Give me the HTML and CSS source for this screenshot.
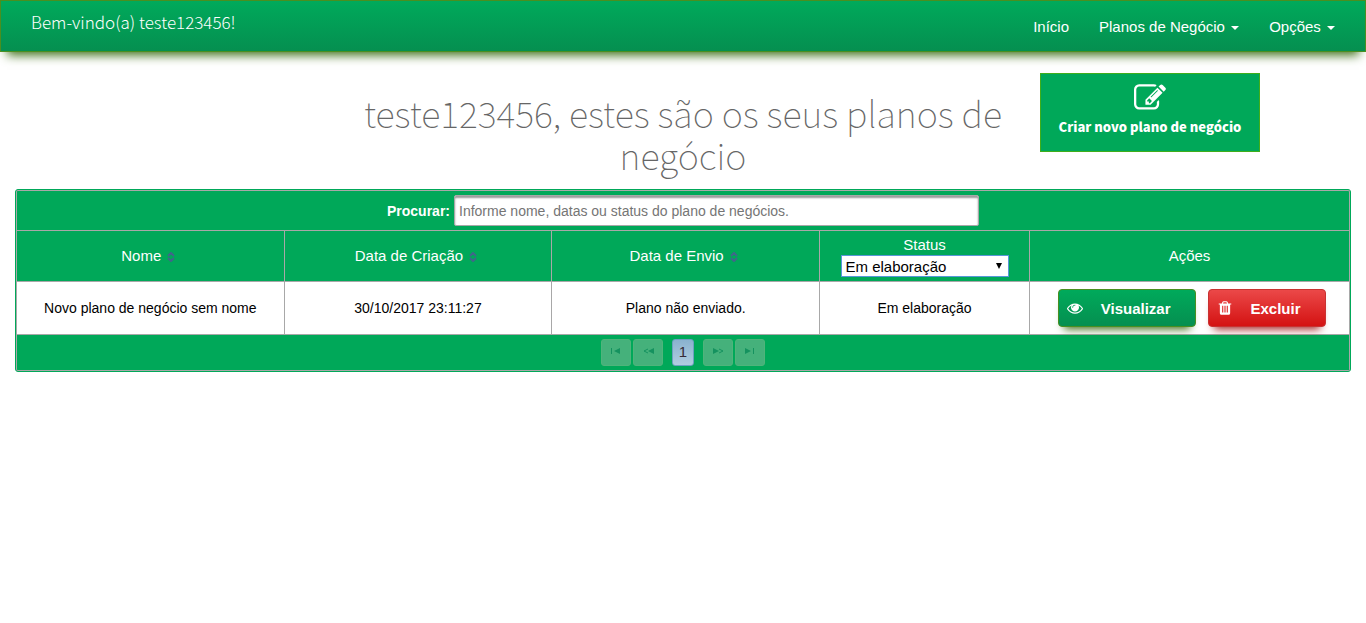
FILE: index.html
```html
<!DOCTYPE html>
<html lang="pt-BR">
<head>
<meta charset="utf-8">
<meta name="viewport" content="width=device-width, initial-scale=1">
<title>Planos de negócio</title>
<link rel="stylesheet" href="styles.css">
</head>
<body>
<header class="navbar">
  <p class="welcome">Bem-vindo(a) teste123456!</p>
  <nav class="menu">
    <a href="#">Início</a>
    <a href="#">Planos de Negócio <span class="caret"></span></a>
    <a href="#">Opções <span class="caret"></span></a>
  </nav>
</header>
<main>
  <div class="intro">
    <h1 class="title">teste123456, estes são os seus planos de negócio</h1>
    <div class="intro-action">
      <button type="button" class="create">
        <svg class="create-icon" viewBox="0 0 1792 1792" aria-hidden="true"><path d="M888 1184l116-116-152-152-116 116v56h96v96h56zm440-720q-16-16-33 1l-350 350q-17 17-1 33t33-1l350-350q17-17 1-33zm80 594v190q0 119-84.5 203.5t-203.5 84.5h-832q-119 0-203.5-84.5t-84.5-203.5v-832q0-119 84.5-203.5t203.5-84.5h832q63 0 117 25 15 7 18 23 3 17-9 29l-49 49q-14 14-32 8-23-6-45-6h-832q-66 0-113 47t-47 113v832q0 66 47 113t113 47h832q66 0 113-47t47-113v-126q0-13 9-22l64-64q15-15 35-7t20 29zm-96-738l288 288-672 672h-288v-288zm444 132l-92 92-288-288 92-92q28-28 68-28t68 28l152 152q28 28 28 68t-28 68z"/></svg>
        <span>Criar novo plano de negócio</span>
      </button>
    </div>
  </div>
  <section class="plans">
    <div class="search">
      <label for="search">Procurar:</label>
      <input id="search" type="text" placeholder="Informe nome, datas ou status do plano de negócios.">
    </div>
    <table class="grid">
      <colgroup><col class="c-main"><col class="c-main"><col class="c-main"><col class="c-status"><col class="c-actions"></colgroup>
      <thead>
        <tr>
          <th scope="col">Nome <svg class="sort" viewBox="0 0 8 10" aria-hidden="true"><path d="M1 4l3-3 3 3M1 6l3 3 3-3"/></svg></th>
          <th scope="col">Data de Criação <svg class="sort" viewBox="0 0 8 10" aria-hidden="true"><path d="M1 4l3-3 3 3M1 6l3 3 3-3"/></svg></th>
          <th scope="col">Data de Envio <svg class="sort" viewBox="0 0 8 10" aria-hidden="true"><path d="M1 4l3-3 3 3M1 6l3 3 3-3"/></svg></th>
          <th scope="col">
            <label class="status-label" for="status">Status</label>
            <span class="select-wrap">
              <select id="status" class="status"><option>Em elaboração</option></select>
              <svg class="arrow" viewBox="0 0 6 6" aria-hidden="true"><path d="M0 0h6L3 6z"/></svg>
            </span>
          </th>
          <th scope="col">Ações</th>
        </tr>
      </thead>
      <tbody>
        <tr>
          <td>Novo plano de negócio sem nome</td>
          <td>30/10/2017 23:11:27</td>
          <td>Plano não enviado.</td>
          <td>Em elaboração</td>
          <td>
            <div class="actions">
              <button type="button" class="btn view"><svg class="icon" viewBox="0 0 1792 1792" aria-hidden="true"><path d="M1664 960q-152-236-381-353 61 104 61 225 0 185-131.5 316.5t-316.5 131.5-316.5-131.5-131.5-316.5q0-121 61-225-229 117-381 353 133 205 333.5 326.5t434.5 121.5 434.5-121.5 333.5-326.5zm-720-384q0-20-14-34t-34-14q-125 0-214.5 89.5t-89.5 214.5q0 20 14 34t34 14 34-14 14-34q0-86 61-147t147-61q20 0 34-14t14-34zm848 384q0 34-20 69-140 230-376.5 368.5t-499.5 138.5-499.5-139-376.5-368q-20-35-20-69t20-69q140-229 376.5-368t499.5-139 499.5 139 376.5 368q20 35 20 69z"/></svg><span>Visualizar</span></button>
              <button type="button" class="btn remove"><svg class="icon" viewBox="0 0 1792 1792" aria-hidden="true"><path d="M704 1376v-704q0-14-9-23t-23-9h-64q-14 0-23 9t-9 23v704q0 14 9 23t23 9h64q14 0 23-9t9-23zm256 0v-704q0-14-9-23t-23-9h-64q-14 0-23 9t-9 23v704q0 14 9 23t23 9h64q14 0 23-9t9-23zm256 0v-704q0-14-9-23t-23-9h-64q-14 0-23 9t-9 23v704q0 14 9 23t23 9h64q14 0 23-9t9-23zm-544-992h448l-48-117q-7-9-17-11h-317q-10 2-17 11zm928 32v64q0 14-9 23t-23 9h-96v948q0 83-47 143.5t-113 60.5h-832q-66 0-113-58.5t-47-141.5v-952h-96q-14 0-23-9t-9-23v-64q0-14 9-23t23-9h309l70-167q15-37 54-63t79-26h320q40 0 79 26t54 63l70 167h309q14 0 23 9t9 23z"/></svg><span>Excluir</span></button>
            </div>
          </td>
        </tr>
      </tbody>
    </table>
    <nav class="pager" aria-label="Paginação">
      <button type="button" class="page" aria-label="Primeira" disabled><svg viewBox="0 0 12 6" aria-hidden="true"><path d="M1 0h1v6H1zM10 0v6L4 3z"/></svg></button>
      <button type="button" class="page" aria-label="Anterior" disabled><svg viewBox="0 0 12 6" aria-hidden="true"><path d="M12 0v6L6 3z"/><path class="line" d="M6 1L2 3l4 2"/></svg></button>
      <button type="button" class="page current">1</button>
      <button type="button" class="page" aria-label="Próxima" disabled><svg viewBox="0 0 12 6" aria-hidden="true"><path d="M1 0v6l6-3z"/><path class="line" d="M7 1l4 2-4 2"/></svg></button>
      <button type="button" class="page" aria-label="Última" disabled><svg viewBox="0 0 12 6" aria-hidden="true"><path d="M1 0v6l6-3zM9 0h1v6H9z"/></svg></button>
    </nav>
  </section>
</main>
</body>
</html>
```
FILE: styles.css
```css
* { box-sizing: border-box; }

body {
  margin: 0;
  background: #fff;
  color: #000;
  font: 14px/20px "Liberation Sans", Arial, sans-serif;
}

button, input, select { font-family: inherit; }

.navbar {
  display: flex;
  justify-content: space-between;
  min-height: 52px;
  padding: 0 15px;
  border: 1px solid #4a8f20;
  background: linear-gradient(#00aa5b, #058f50);
  box-shadow: 0 10px 10px -7px #3a6b12;
  color: #fff;
}

.welcome {
  margin: 0;
  padding: 11px 15px;
  font: 300 17px/20px "Noto Sans CJK SC", sans-serif;
}

.menu { display: flex; }

.menu a {
  padding: 16px 15px 14px;
  color: #fff;
  font-size: 15px;
  text-decoration: none;
}

.caret {
  display: inline-block;
  margin-left: 2px;
  border: 4px solid transparent;
  border-top-color: #fff;
  border-bottom: 0;
  vertical-align: middle;
}

.intro {
  display: grid;
  grid-template-columns: 1fr 2fr 1fr;
  padding-top: 21px;
}

.title {
  grid-column: 2;
  margin: 18px 0 14px;
  padding: 0 15px;
  color: #666;
  font: 100 36px/42px "Noto Sans CJK SC", sans-serif;
  text-align: center;
}

.intro-action { padding: 0 15px; }

.create {
  display: flex;
  flex-direction: column;
  align-items: center;
  gap: 3px;
  padding: 8px 18px 14px;
  border: 1px solid #3fae1a;
  background: #00a859;
  color: #fff;
  font: 900 13px/20px "Noto Sans CJK SC", sans-serif;
}

.create-icon { width: 32px; height: 32px; fill: #fff; }

.plans {
  margin: 0 15px;
  border: 1px solid #00a859;
  border-radius: 3px;
  background: #00a859;
}

.search {
  display: flex;
  align-items: center;
  justify-content: center;
  gap: 4px;
  min-height: 40px;
  border: 1px solid #a8a8a8;
  border-bottom: 0;
  border-radius: 2px 2px 0 0;
}

.search label { color: #fff; font-weight: bold; }

.search input {
  width: 525px;
  height: 31px;
  padding: 4px;
  border: 1px solid #a8a8a8;
  border-radius: 2px;
  background: #fff;
  box-shadow: inset 0 2px 2px #999;
  font-size: 14px;
}

.search input::placeholder { color: #757575; }

.grid {
  width: 100%;
  border-collapse: collapse;
  table-layout: fixed;
}

.c-main { width: auto; }
.c-status { width: 210px; }
.c-actions { width: 320px; }

.grid th, .grid td {
  padding: 4px 10px;
  border: 1px solid #a8a8a8;
  text-align: center;
}

.grid th {
  height: 51px;
  color: #fff;
  font-size: 15px;
  font-weight: normal;
}

.grid td {
  height: 53px;
  background: #fff;
}

.sort {
  width: 8px;
  height: 10px;
  margin: 0 4px 0 2px;
  fill: none;
  stroke: #40668a;
  stroke-width: 2;
  vertical-align: -1px;
}

.status-label { display: block; }

.select-wrap {
  display: block;
  position: relative;
  width: 168px;
  margin: 0 auto;
}

.status {
  display: block;
  width: 100%;
  height: 22px;
  padding: 0 4px;
  border: 1px solid #5897d8;
  border-radius: 0;
  background: #fff;
  appearance: none;
  color: #000;
  font-size: 15px;
}

.arrow {
  position: absolute;
  top: 8px;
  right: 7px;
  width: 6px;
  height: 6px;
}

.actions {
  display: flex;
  justify-content: center;
  gap: 12px;
  padding-left: 4px;
}

.btn {
  display: flex;
  align-items: center;
  height: 38px;
  padding: 0 24px 0 8px;
  border: 1px solid #4a8f20;
  border-radius: 4px;
  background: linear-gradient(#00aa5b, #058f50);
  box-shadow: 0 8px 8px -6px #3a6b12;
  color: #fff;
  font-size: 15px;
  font-weight: bold;
}

.btn .icon {
  width: 16px;
  height: 16px;
  fill: #fff;
}

.view { width: 138px; }

.remove {
  width: 118px;
  border-color: #c83232;
  background: linear-gradient(#eb4848, #d41212);
  box-shadow: 0 8px 8px -6px #a01818;
}

.btn span { margin-left: auto; }

.pager {
  display: flex;
  align-items: center;
  justify-content: center;
  gap: 2px;
  min-height: 36px;
  border: 1px solid #a8a8a8;
  border-top: 0;
  border-radius: 0 0 2px 2px;
}

.page {
  display: flex;
  justify-content: center;
  width: 30px;
  height: 27px;
  padding: 8px 0 0;
  border: 1px solid #4fb47b;
  border-radius: 3px;
  background: #45b17b;
}

.page svg { width: 12px; height: 6px; fill: #15925f; }
.page .line { fill: none; stroke: #15925f; }

.current {
  width: 22px;
  margin: 0 7px;
  padding: 2px 0 0;
  border-color: #6da0c0;
  background: linear-gradient(#8ab2cf, #b1cde0);
  color: #362b36;
  font-size: 15px;
  line-height: 20px;
}
```
